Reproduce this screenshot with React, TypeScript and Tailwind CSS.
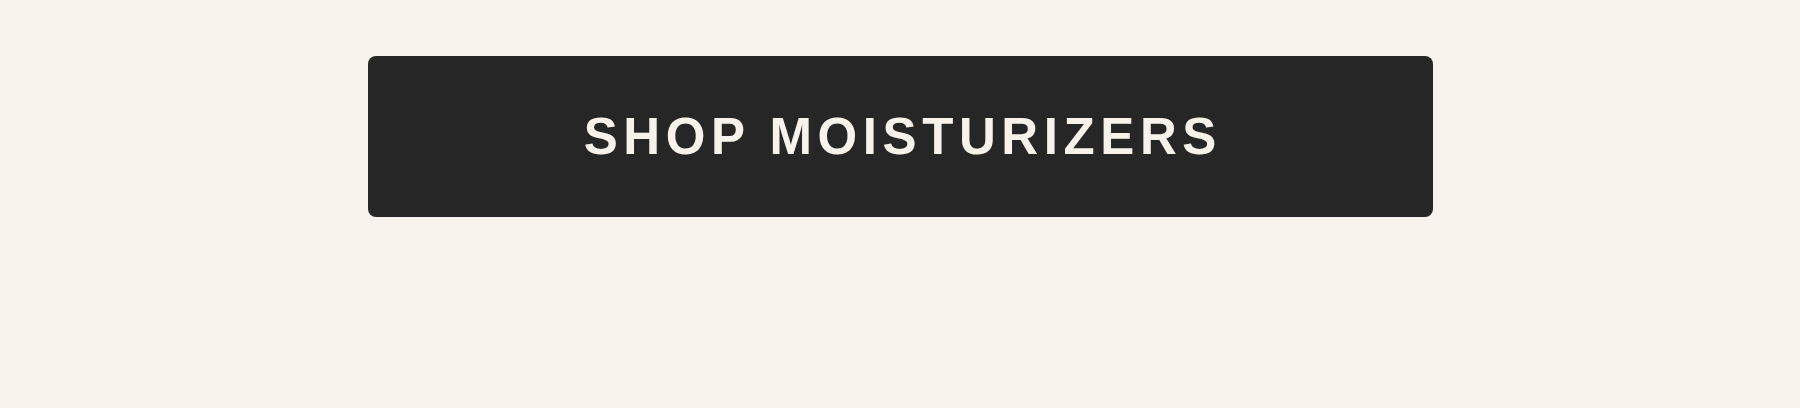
export default function App() {
  return (
    <div className="w-full h-[408px] bg-[#f7f3ec] pt-[56px]">
      <a
        href="#"
        className="mx-auto flex h-[161px] w-[1065px] items-center justify-center rounded-[8px] bg-[#262626] text-[#f7f3ec] text-[51px] font-bold tracking-[5.6px] uppercase leading-none"
        style={{ fontFamily: '"Liberation Sans", Arial, sans-serif' }}
      >
        <span className="pl-[5.6px]">SHOP MOISTURIZERS</span>
      </a>
    </div>
  );
}
